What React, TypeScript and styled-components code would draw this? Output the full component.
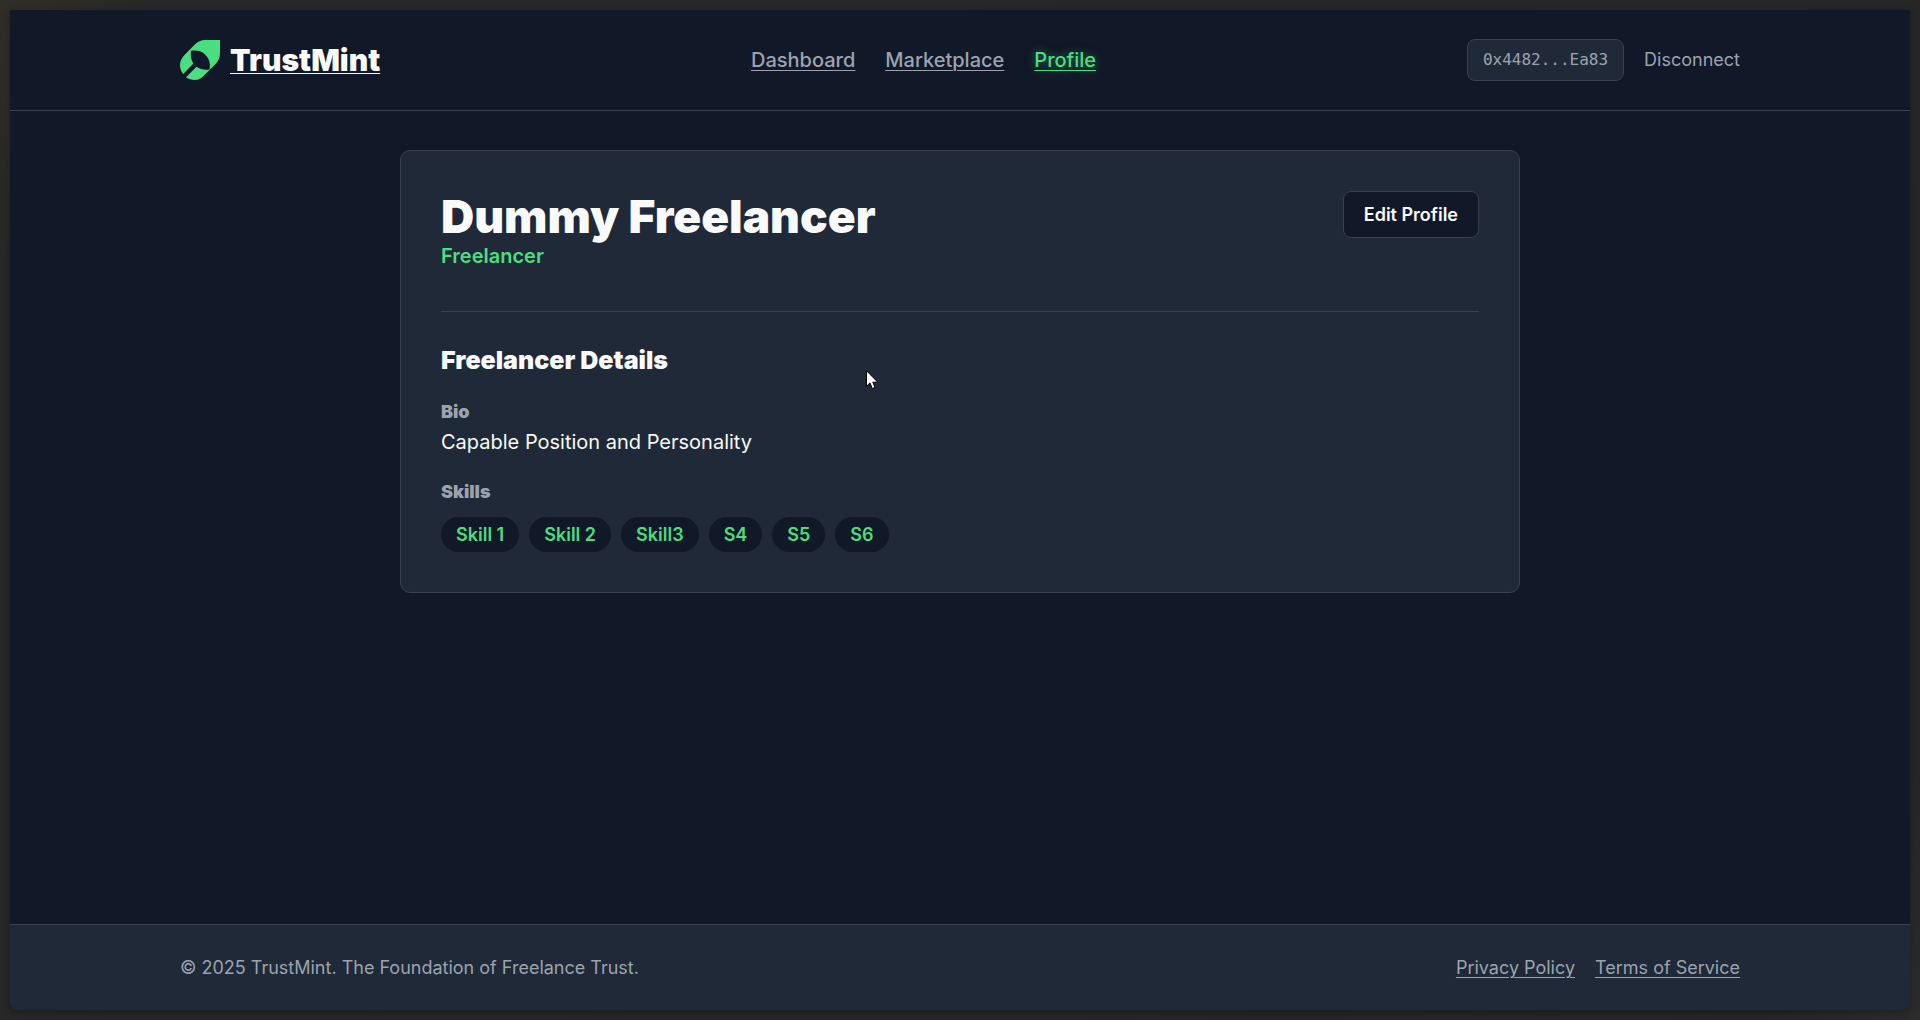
import React from "react";
import styled, { createGlobalStyle } from "styled-components";

const color = {
  page: "#111827",
  panel: "#1f2937",
  line: "#374151",
  muted: "#9ca3af",
  text: "#f9fafb",
  mint: "#4ade80",
};

const GlobalStyle = createGlobalStyle`
  *, *::before, *::after { box-sizing: border-box; }
  body {
    margin: 0;
    background: #262626;
    color: ${color.text};
    font-family: Inter, "Liberation Sans", sans-serif;
    font-size: 20px;
    line-height: 30px;
  }
  h1, h2, h3, p, ul { margin: 0; padding: 0; }
  a { text-decoration-thickness: 1px; text-underline-offset: 3px; }
  button { font: inherit; cursor: pointer; }
`;

const Backdrop = styled.div`
  display: flex;
  min-height: 100vh;
  padding: 10px;
  background: linear-gradient(120deg, #302e26 0%, #282828 6%, #262626 94%, #2c2c2c 100%);
`;

const Shell = styled.div`
  flex: 1;
  display: flex;
  flex-direction: column;
  overflow: hidden;
  border-radius: 0 0 6px 6px;
  background: ${color.page};
  box-shadow: 0 2px 8px rgba(0, 0, 0, 0.3);
`;

const Container = styled.div`
  width: 100%;
  max-width: 1600px;
  margin: 0 auto;
  padding: 0 20px;
  display: flex;
  align-items: center;
  justify-content: space-between;
`;

const Header = styled.header`
  display: flex;
  height: 101px;
  border-bottom: 1px solid ${color.line};
`;

const Brand = styled.a`
  display: flex;
  align-items: center;
  gap: 10px;
  color: ${color.text};
  font-size: 30px;
  font-weight: 900;
  text-underline-offset: 2px;
`;

const Nav = styled.nav`
  display: flex;
  gap: 30px;
`;

const NavLink = styled.a<{ $active?: boolean }>`
  color: ${(p) => (p.$active ? color.mint : color.muted)};
  font-weight: 500;
  text-shadow: ${(p) => (p.$active ? "0 0 10px rgba(74, 222, 128, 0.5)" : "none")};
`;

const Account = styled.div`
  display: flex;
  align-items: center;
  gap: 20px;
`;

const Address = styled.span`
  padding: 5px 15px;
  border: 1px solid ${color.line};
  border-radius: 8px;
  background: ${color.panel};
  color: ${color.muted};
  font-family: "DejaVu Sans Mono", "Liberation Mono", monospace;
  font-size: 16px;
`;

const TextButton = styled.button`
  padding: 0;
  border: 0;
  background: none;
  color: ${color.muted};
  && { font-size: 18px; }
`;

const Main = styled.main`
  flex: 1;
  padding: 39px 20px;
`;

const Card = styled.section`
  max-width: 1120px;
  margin: 0 auto;
  padding: 40px;
  border: 1px solid ${color.line};
  border-radius: 10px;
  background: ${color.panel};
`;

const CardHeader = styled.div`
  display: flex;
  align-items: flex-start;
  justify-content: space-between;
  padding-bottom: 40px;
  border-bottom: 1px solid ${color.line};
`;

const Name = styled.h1`
  font-size: 46px;
  font-weight: 900;
  line-height: 50px;
`;

const Role = styled.p`
  color: ${color.mint};
  font-weight: 600;
`;

const EditButton = styled.button`
  padding: 8px 20px;
  border: 1px solid ${color.line};
  border-radius: 8px;
  background: ${color.page};
  color: ${color.text};
  && { font-size: 18px; font-weight: 600; line-height: 29px; }
`;

const Details = styled.div`
  display: flex;
  flex-direction: column;
  gap: 20px;
  padding-top: 31px;
`;

const SectionTitle = styled.h2`
  font-size: 25px;
  font-weight: 900;
  line-height: 34px;
`;

const Label = styled.h3`
  color: ${color.muted};
  font-size: 18px;
  font-weight: 900;
  line-height: 30px;
`;

const Skills = styled.ul`
  display: flex;
  flex-wrap: wrap;
  gap: 10px;
  padding-top: 10px;
  list-style: none;
`;

const Skill = styled.li`
  padding: 3px 15px;
  border-radius: 18px;
  background: ${color.page};
  color: ${color.mint};
  font-size: 18px;
  font-weight: 600;
  line-height: 29px;
`;

const Footer = styled.footer`
  display: flex;
  height: 86px;
  border-top: 1px solid ${color.line};
  background: ${color.panel};
  color: ${color.muted};
  font-size: 18px;
`;

const FooterLinks = styled.nav`
  display: flex;
  gap: 20px;
`;

const FooterLink = styled.a`
  color: inherit;
`;

const Pointer = styled.svg`
  position: absolute;
  left: 866px;
  top: 370px;
  pointer-events: none;
`;

const LeafLogo = () => (
  <svg width="40" height="40" viewBox="0 0 40 40" fill={color.mint} aria-hidden="true">
    <path d="M40 0V13C40 17.5 38.5 21 35.5 24L25 34.5C21.5 38.2 18.5 40 14.5 40C11.5 40 8.5 39 6 37.2L16.5 26.7C20.5 29.5 25 30.2 29.5 29.4C30.2 25.8 30 22 28.3 18.8C25.2 12.5 19 9.2 11 10.8C10.4 15.5 10.8 19.8 13.4 23.5L3.2 33.9C1 31.3 0 28.3 0 25.2C0 21.2 1.6 17.8 4.7 14.7L14.8 4.6C18 1.5 21 0 25 0Z" />
  </svg>
);

const skills = ["Skill 1", "Skill 2", "Skill3", "S4", "S5", "S6"];

export default function App() {
  return (
    <Backdrop>
      <GlobalStyle />
      <Shell>
        <Header>
          <Container>
            <Brand href="#">
              <LeafLogo />
              <span>TrustMint</span>
            </Brand>
            <Nav aria-label="Main">
              <NavLink href="#dashboard">Dashboard</NavLink>
              <NavLink href="#marketplace">Marketplace</NavLink>
              <NavLink href="#profile" $active aria-current="page">Profile</NavLink>
            </Nav>
            <Account>
              <Address>0x4482...Ea83</Address>
              <TextButton type="button">Disconnect</TextButton>
            </Account>
          </Container>
        </Header>
        <Main>
          <Card>
            <CardHeader>
              <div>
                <Name>Dummy Freelancer</Name>
                <Role>Freelancer</Role>
              </div>
              <EditButton type="button">Edit Profile</EditButton>
            </CardHeader>
            <Details>
              <SectionTitle>Freelancer Details</SectionTitle>
              <div>
                <Label>Bio</Label>
                <p>Capable Position and Personality</p>
              </div>
              <div>
                <Label>Skills</Label>
                <Skills>
                  {skills.map((skill) => (
                    <Skill key={skill}>{skill}</Skill>
                  ))}
                </Skills>
              </div>
            </Details>
          </Card>
        </Main>
        <Footer>
          <Container>
            <p>© 2025 TrustMint. The Foundation of Freelance Trust.</p>
            <FooterLinks aria-label="Legal">
              <FooterLink href="#privacy">Privacy Policy</FooterLink>
              <FooterLink href="#terms">Terms of Service</FooterLink>
            </FooterLinks>
          </Container>
        </Footer>
      </Shell>
      <Pointer width="13" height="20" viewBox="0 0 13 20" aria-hidden="true">
        <path d="M.5 .8V16.3L4 13L6.4 18.6L9 17.4L6.8 12.2H11.8Z" fill="#fff" stroke="#000" />
      </Pointer>
    </Backdrop>
  );
}
